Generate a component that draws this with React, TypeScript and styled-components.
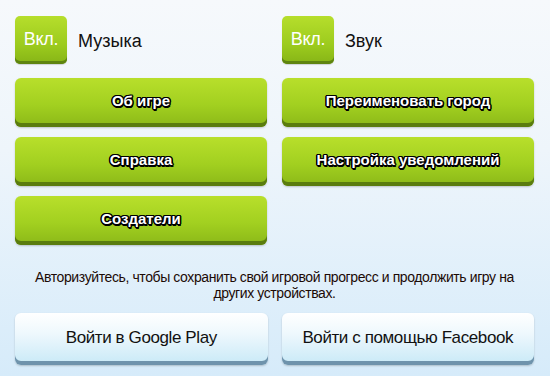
import styled, { createGlobalStyle } from 'styled-components';

const GlobalStyle = createGlobalStyle`
  html, body {
    margin: 0;
    padding: 0;
    height: 100%;
  }
  body {
    font-family: "Liberation Sans", Arial, sans-serif;
    background: linear-gradient(180deg, #f6f9fc 0%, #eef5fb 40%, #d6ebfa 100%);
    overflow: hidden;
  }
`;

const Screen = styled.div`
  width: 550px;
  height: 376px;
  box-sizing: border-box;
  padding: 16px 16px 0 15px;
  display: flex;
  flex-direction: column;
`;

const Grid = styled.div`
  display: grid;
  grid-template-columns: 252px 252px;
  column-gap: 15px;
  row-gap: 10px;
`;

const ToggleRow = styled.div`
  display: flex;
  align-items: center;
  gap: 11px;
  height: 48px;
  margin-bottom: 4px;
`;

const ToggleButton = styled.button`
  width: 52px;
  height: 48px;
  box-sizing: border-box;
  border: none;
  border-radius: 5px;
  padding: 0 0 1px;
  background: linear-gradient(180deg, #b6de2c 0%, #9ccb1e 60%, #86b416 100%);
  box-shadow: inset 0 -3px 0 #5e8410, 0 1px 1px rgba(0, 0, 0, 0.15);
  color: #fff;
  font-family: inherit;
  font-size: 18px;
  letter-spacing: -0.3px;
  cursor: pointer;
`;

const ToggleLabel = styled.span`
  font-size: 18px;
  color: #111;
  padding-top: 2px;
`;

const MenuButton = styled.button`
  width: 252px;
  height: 49px;
  box-sizing: border-box;
  border: none;
  border-radius: 6px;
  padding: 0 0 4px;
  background: linear-gradient(180deg, #b8df2b 0%, #a2d020 55%, #8bb818 100%);
  box-shadow: inset 0 -4px 0 #5a7c0e, 0 1px 2px rgba(0, 0, 0, 0.2);
  color: #fff;
  font-family: inherit;
  font-weight: bold;
  font-size: 15px;
  text-shadow:
    1.5px 0 0 #000, -1.5px 0 0 #000, 0 1.5px 0 #000, 0 -1.5px 0 #000,
    1px 1px 0 #000, -1px -1px 0 #000, 1px -1px 0 #000, -1px 1px 0 #000,
    1px 2px 0 #000;
  cursor: pointer;
`;

const Notice = styled.p`
  margin: 24px 0 0;
  text-align: center;
  font-size: 14px;
  line-height: 16px;
  letter-spacing: -0.4px;
  color: #1c0a06;
`;

const LoginRow = styled.div`
  display: flex;
  gap: 14px;
  margin-top: 12px;
`;

const LoginButton = styled.button`
  width: 253px;
  height: 52px;
  box-sizing: border-box;
  border: none;
  border-radius: 6px;
  padding: 0 0 2px;
  background: linear-gradient(180deg, #ffffff 0%, #eef8fd 40%, #c8e9f7 100%);
  box-shadow: inset 0 -4px 0 #6f93ac, 0 1px 2px rgba(0, 0, 0, 0.2);
  color: #111;
  font-family: inherit;
  font-size: 17px;
  letter-spacing: -0.4px;
  cursor: pointer;
`;

const menu = [
  'Об игре',
  'Переименовать город',
  'Справка',
  'Настройка уведомлений',
  'Создатели',
];

export default function App() {
  return (
    <>
      <GlobalStyle />
      <Screen>
        <Grid>
          <ToggleRow>
            <ToggleButton>Вкл.</ToggleButton>
            <ToggleLabel>Музыка</ToggleLabel>
          </ToggleRow>
          <ToggleRow>
            <ToggleButton>Вкл.</ToggleButton>
            <ToggleLabel>Звук</ToggleLabel>
          </ToggleRow>
          {menu.map((label) => (
            <MenuButton key={label}>{label}</MenuButton>
          ))}
        </Grid>
        <Notice>
          Авторизуйтесь, чтобы сохранить свой игровой прогресс и продолжить игру на
          <br />
          других устройствах.
        </Notice>
        <LoginRow>
          <LoginButton>Войти в Google Play</LoginButton>
          <LoginButton>Войти с помощью Facebook</LoginButton>
        </LoginRow>
      </Screen>
    </>
  );
}
